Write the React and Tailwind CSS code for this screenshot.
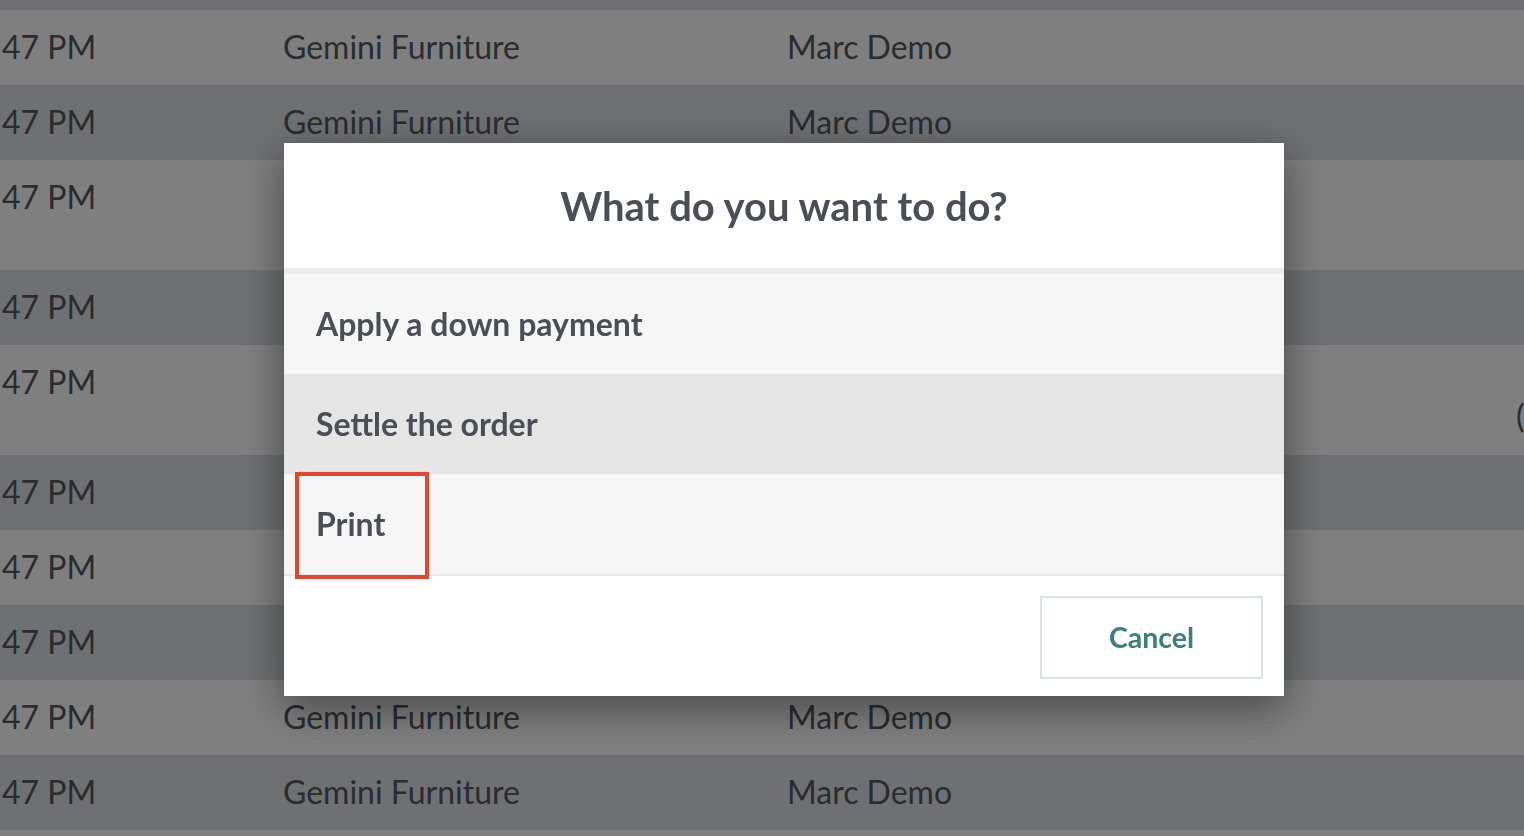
import { useState } from "react"

const rows = [
  { time: "47 PM", store: "Gemini Furniture", user: "Marc Demo" },
  { time: "47 PM", store: "Gemini Furniture", user: "Marc Demo" },
  { time: "47 PM", store: "Gemini Furniture", user: "Marc Demo" },
  { time: "47 PM", store: "Gemini Furniture", user: "Marc Demo", tall: true },
  { time: "47 PM", store: "Gemini Furniture", user: "Marc Demo" },
  { time: "47 PM", store: "Gemini Furniture", user: "Marc Demo", tall: true, note: "(Lot 1)" },
  { time: "47 PM", store: "Gemini Furniture", user: "Marc Demo" },
  { time: "47 PM", store: "Gemini Furniture", user: "Marc Demo" },
  { time: "47 PM", store: "Gemini Furniture", user: "Marc Demo" },
  { time: "47 PM", store: "Gemini Furniture", user: "Marc Demo" },
  { time: "47 PM", store: "Gemini Furniture", user: "Marc Demo" },
  { time: "47 PM", store: "Gemini Furniture", user: "Marc Demo" },
]

const actions = ["Apply a down payment", "Settle the order", "Print"]

export default function App() {
  const [hovered, setHovered] = useState(1)

  return (
    <div
      className="relative h-[836px] w-[1524px] overflow-hidden bg-white"
      style={{ fontFamily: "Lato, 'Open Sans', sans-serif" }}
    >
      {/* Orders list behind the dialog */}
      <div className="-mt-[65px]">
        {rows.map((row, i) => (
          <div
            key={i}
            className={`flex pt-[20px] text-[32px] leading-[34px] text-[#55585f] ${
              row.tall ? "h-[110px]" : "h-[75px]"
            } ${i % 2 === 0 ? "bg-[#dee0e6]" : "bg-white"}`}
          >
            <div className="w-[283px] shrink-0 pl-[2px]">{row.time}</div>
            <div className="w-[504px] shrink-0">{row.store}</div>
            <div className="w-[727px] shrink-0">{row.user}</div>
            <div className="w-[200px] shrink-0 pl-[2px]">
              {row.note && (
                <>
                  <div>&nbsp;</div>
                  <div>{row.note}</div>
                </>
              )}
            </div>
          </div>
        ))}
      </div>

      {/* Dialog overlay */}
      <div className="fixed inset-0 flex items-start bg-black/50 pl-[284px] pt-[143px]">
        <div className="relative flex w-[1000px] flex-col bg-white shadow-[0_12px_40px_rgba(0,0,0,0.45)]">
          <div className="flex h-[125px] items-center justify-center">
            <h1 className="text-[40px] font-bold leading-none text-[#4a4e57]">
              What do you want to do?
            </h1>
          </div>
          <div className="h-[6px] bg-[#ebebeb]" />
          {actions.map((label, i) => (
            <button
              key={label}
              onMouseEnter={() => setHovered(i)}
              className={`flex h-[100px] items-center pl-[32px] text-left text-[32px] font-bold text-[#4a4e57] ${
                hovered === i ? "bg-[#e5e5e5]" : "bg-[#f6f6f6]"
              }`}
            >
              {label}
            </button>
          ))}
          <div className="h-[2px] bg-[#e8e8e8]" />
          <div className="flex h-[120px] items-start justify-end pr-[21px] pt-[20px]">
            <button className="flex h-[83px] w-[223px] items-center justify-center border-2 border-[#dee2e6] bg-white text-[28.5px] font-bold text-[#3b7f80]">
              Cancel
            </button>
          </div>

          {/* highlight annotation */}
          <div className="pointer-events-none absolute left-[11px] top-[329px] h-[107px] w-[134px] border-4 border-[#e8432c]" />
        </div>
      </div>
    </div>
  )
}
